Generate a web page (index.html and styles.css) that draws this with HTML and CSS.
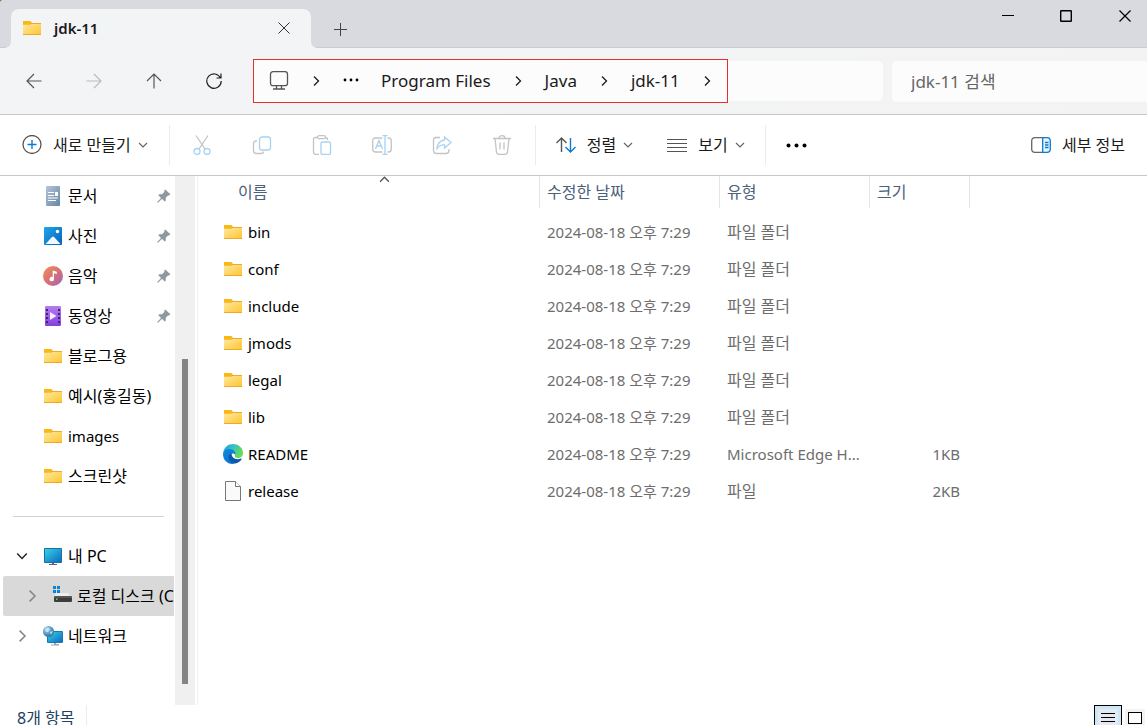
FILE: index.html
```html
<!DOCTYPE html>
<html lang="ko">
<head>
    <meta charset="UTF-8">
    <meta name="viewport" content="width=device-width, initial-scale=1.0">
    <title>jdk-11</title>
    <link rel="stylesheet" href="styles.css">
</head>
<body>
    <!-- Shared icons -->
    <svg class="sprite" aria-hidden="true">
        <defs>
            <linearGradient id="g-folder" x1="0" y1="0" x2="1" y2="1">
                <stop offset="0" stop-color="#ffe9a6"/><stop offset="1" stop-color="#fec62f"/>
            </linearGradient>
            <linearGradient id="g-doc" x1="0" y1="0" x2="1" y2="1">
                <stop offset="0" stop-color="#b4c6d8"/><stop offset="1" stop-color="#6585a5"/>
            </linearGradient>
            <linearGradient id="g-photo" x1="0" y1="0" x2="1" y2="1">
                <stop offset="0" stop-color="#1ba7ea"/><stop offset="1" stop-color="#0a62b8"/>
            </linearGradient>
            <linearGradient id="g-music" x1="0" y1="0" x2="1" y2="1">
                <stop offset="0" stop-color="#f29155"/><stop offset="0.55" stop-color="#d46f78"/><stop offset="1" stop-color="#9a63c4"/>
            </linearGradient>
            <linearGradient id="g-video" x1="0" y1="0" x2="0" y2="1">
                <stop offset="0" stop-color="#b67cf2"/><stop offset="1" stop-color="#8340dc"/>
            </linearGradient>
            <linearGradient id="g-screen" x1="0" y1="0" x2="1" y2="1">
                <stop offset="0" stop-color="#35d3e0"/><stop offset="1" stop-color="#0b6cc4"/>
            </linearGradient>
            <linearGradient id="g-edge-top" x1="0" y1="0" x2="1" y2="0.4">
                <stop offset="0" stop-color="#1e9de0"/><stop offset="0.5" stop-color="#35c1c8"/><stop offset="1" stop-color="#66dc51"/>
            </linearGradient>
            <linearGradient id="g-edge-left" x1="0" y1="0" x2="0.6" y2="1">
                <stop offset="0" stop-color="#1489d8"/><stop offset="1" stop-color="#0672d2"/>
            </linearGradient>
            <radialGradient id="g-globe" cx="0.35" cy="0.3" r="0.8">
                <stop offset="0" stop-color="#b9dcee"/><stop offset="0.6" stop-color="#4a92bf"/><stop offset="1" stop-color="#2c6c9c"/>
            </radialGradient>
        </defs>
        <symbol id="folder" viewBox="0 0 20 20">
            <path d="M1 4V14.500H19V5H10L8 3H1Z" fill="#f0ab1c"/>
            <path d="M1 6.500H8.500L9.500 5.500H19V16.500H1Z" fill="url(#g-folder)"/>
            <path d="M1 3H8L9.500 4.500L8 6.500H1Z" fill="#fbb714"/>
            <path d="M9 5.500H19M1 16.500H19" stroke="#eea92a"/>
        </symbol>
        <symbol id="doc" viewBox="0 0 20 20">
            <rect x="3" y="0" width="14" height="20" rx="1" fill="url(#g-doc)"/>
            <path d="M5 6.500H11M5 9.500H11M5 12H15M5 14.500H13" stroke="#fff"/>
            <rect x="12" y="6" width="3" height="4" fill="#fff"/>
        </symbol>
        <symbol id="photo" viewBox="0 0 20 20">
            <rect x="1" y="1" width="18" height="18" rx="1" fill="url(#g-photo)"/>
            <path d="M2.500 18L9 11Q10 10 11 11L17.500 18Z" fill="#f2f8ff"/>
            <circle cx="14.500" cy="5.500" r="1.700" fill="#fff"/>
        </symbol>
        <symbol id="music" viewBox="0 0 20 20">
            <circle cx="10" cy="10" r="10" fill="url(#g-music)"/>
            <path d="M9.700 4.500L13.800 5.800V8L11 7.200V13A2.200 2.200 0 1 1 9.700 11Z" fill="#fff"/>
        </symbol>
        <symbol id="video" viewBox="0 0 20 20">
            <rect x="2" y="0" width="16" height="20" rx="1" fill="url(#g-video)"/>
            <path d="M4 3V19M16 3V19" stroke="#3e2079" stroke-width="2" stroke-dasharray="2 2"/>
            <path d="M7 6L13.500 10L7 14Z" fill="#f5eefe"/>
        </symbol>
        <symbol id="pc" viewBox="0 0 20 20">
            <path d="M9 16H11V18H14V19H6V18H9Z" fill="#5b6670"/>
            <rect x="1" y="2" width="18" height="15" rx="1" fill="#196ea6"/>
            <rect x="2" y="3" width="16" height="13" fill="url(#g-screen)"/>
        </symbol>
        <symbol id="disk" viewBox="0 0 20 20">
            <path d="M4 7H16L19 11H2Z" fill="#ededed"/>
            <rect x="2" y="10" width="18" height="6" rx="1" fill="#3c3c3c"/>
            <path d="M2 11H20" stroke="#707070"/>
            <rect x="4" y="12.500" width="1.500" height="1.500" fill="#49e349"/>
            <path d="M1 0H4V3H1ZM5 0H8V3H5ZM1 4H4V7H1ZM5 4H8V7H5Z" fill="#0b82d5"/>
        </symbol>
        <symbol id="network" viewBox="0 0 20 20">
            <path d="M11 16H13V18H16V19.500H8V18.500H11Z" fill="#9ca7af"/>
            <rect x="4" y="5" width="16" height="12" rx="1" fill="#1879b5"/>
            <rect x="5" y="6" width="14" height="10" fill="url(#g-screen)"/>
            <circle cx="5.500" cy="5.500" r="5.500" fill="url(#g-globe)"/>
            <path d="M2 3L5 1.500L7 3L5 6L3 6ZM7 6L10 5L8 9Z" fill="#d7e8ee" opacity="0.8"/>
        </symbol>
        <symbol id="edge" viewBox="0 0 20 20">
            <path d="M0.300 8C1.200 3.300 5.200 0 10 0C15.800 0 20 4.200 20 9C20 12.200 17.700 14 15 14C12.700 14 11.500 13 12 12C13.200 9.800 11.500 7 8.500 6C5 4.800 1.700 6 0.300 8Z" fill="url(#g-edge-top)"/>
            <path d="M0 10C0 6.800 3 4.700 6.500 5C10.500 5.300 13 8.200 12.500 11C10.500 8.500 7.500 9.500 7 12.500C6.500 16 9 19 12 19.700C5 21 0 16.500 0 10Z" fill="url(#g-edge-left)"/>
            <path d="M8.500 9.300C6 10.200 5 13 6.200 15.600C7.500 18.300 10 19.600 12.500 19.600C15.500 18.800 17.600 17 18.800 15C19 14.600 18.600 14.300 18.200 14.500C13.500 16.500 8.500 14.500 8.500 9.300Z" fill="#0c59a4"/>
        </symbol>
        <symbol id="file" viewBox="0 0 20 20">
            <path d="M2.500 0.500H12.500L17.500 5.500V19.500H2.500Z" fill="#fafafa" stroke="#777"/>
            <path d="M12.500 0.500V5.500H17.500" fill="#fff" stroke="#777"/>
        </symbol>
        <symbol id="pin" viewBox="0 0 14 14">
            <path d="M8.200 0.600L13.400 5.300L12 6.400H11L8.700 8.800V11.700L7.700 12.600L5 9.800L1.300 13.500L0.300 13.700L0.500 12.700L4 9L1.300 6.300L2.200 5.300L5 5.200L7.500 2.700L7.200 1.600Z" fill="#8d989f"/>
        </symbol>
        <symbol id="chev-right" viewBox="0 0 10 10">
            <path d="M3 0.500L7.500 5L3 9.500" fill="none" stroke="currentColor" stroke-width="1.300"/>
        </symbol>
        <symbol id="chev-down" viewBox="0 0 10 10">
            <path d="M1 3L5 7L9 3" fill="none" stroke="currentColor" stroke-width="1.200"/>
        </symbol>
    </svg>

    <div class="window">
        <div class="title-bar">
            <div class="tab">
                <svg class="icon"><use href="#folder"/></svg>
                <span class="tab-title">jdk-11</span>
                <button class="tab-close" aria-label="탭 닫기">
                    <svg width="12" height="12" viewBox="0 0 12 12"><path d="M0.500 0.500L11.500 11.500M11.500 0.500L0.500 11.500" stroke="#333"/></svg>
                </button>
            </div>
            <button class="new-tab" aria-label="새 탭">
                <svg width="13" height="13" viewBox="0 0 13 13"><path d="M6.500 0V13M0 6.500H13" stroke="#444"/></svg>
            </button>
            <div class="window-buttons">
                <button aria-label="최소화"><svg width="12" height="12" viewBox="0 0 12 12"><path d="M0 5.500H12" stroke="#000"/></svg></button>
                <button aria-label="최대화"><svg width="12" height="12" viewBox="0 0 12 12"><rect x="0.700" y="0.700" width="10.600" height="10.600" rx="0.500" fill="none" stroke="#000" stroke-width="1.400"/></svg></button>
                <button aria-label="닫기"><svg width="12" height="12" viewBox="0 0 12 12"><path d="M0.500 0.500L11.500 11.500M11.500 0.500L0.500 11.500" stroke="#000" stroke-width="1.200"/></svg></button>
            </div>
        </div>

        <div class="nav-bar">
            <button class="nav-btn" aria-label="뒤로"><svg width="16" height="16" viewBox="0 0 16 16"><path d="M15.500 8H1M8 1L1 8L8 15"/></svg></button>
            <button class="nav-btn" aria-label="앞으로" disabled><svg width="16" height="16" viewBox="0 0 16 16"><path d="M0.500 8H15M8 1L15 8L8 15"/></svg></button>
            <button class="nav-btn" aria-label="위로"><svg width="16" height="16" viewBox="0 0 16 16"><path d="M8 15.500V1M1 8L8 1L15 8"/></svg></button>
            <button class="nav-btn dark" aria-label="새로 고침"><svg width="16" height="16" viewBox="0 0 16 16"><path d="M14.500 5A7.200 7.200 0 1 0 15.200 8M15 0.500V5H10.500"/></svg></button>
            <div class="address">
                <nav class="crumbs" aria-label="경로">
                    <svg class="icon" viewBox="0 0 20 20"><rect x="1.500" y="0.700" width="17" height="14" rx="2.500" fill="none" stroke="#555" stroke-width="1.300"/><path d="M7.500 15V18M12.500 15V18M4 18H16" stroke="#555" stroke-width="1.300"/></svg>
                    <svg class="chev"><use href="#chev-right"/></svg>
                    <svg width="16" height="16" viewBox="0 0 16 16"><circle cx="2" cy="7" r="1.400"/><circle cx="8" cy="7" r="1.400"/><circle cx="14" cy="7" r="1.400"/></svg>
                    <a href="#">Program Files</a>
                    <svg class="chev"><use href="#chev-right"/></svg>
                    <a href="#">Java</a>
                    <svg class="chev"><use href="#chev-right"/></svg>
                    <a href="#">jdk-11</a>
                    <svg class="chev"><use href="#chev-right"/></svg>
                </nav>
            </div>
            <input class="search" type="search" placeholder="jdk-11 검색" aria-label="jdk-11 검색">
        </div>

        <div class="toolbar">
            <button class="tool new">
                <svg class="icon" viewBox="0 0 20 20" fill="none"><circle cx="10" cy="9.500" r="9" stroke="#555" stroke-width="1.300"/><path d="M10 5V14M5.500 9.500H14.500" stroke="#0a7bd4" stroke-width="1.400"/></svg>
                새로 만들기
                <svg class="small-chev"><use href="#chev-down"/></svg>
            </button>
            <div class="tool-group">
                <button class="tool-icon" aria-label="잘라내기" disabled><svg class="icon" viewBox="0 0 20 20"><path class="gray" d="M4 0.500L13 14M16 0.500L7 14"/><circle class="blue" cx="5" cy="16.500" r="3"/><circle class="blue" cx="15" cy="16.500" r="3"/></svg></button>
                <button class="tool-icon" aria-label="복사" disabled><svg class="icon" viewBox="0 0 20 20"><path class="gray" d="M5 6H4Q1.500 6 1.500 8.500V15.500Q1.500 18.500 4.500 18.500H9Q11.500 18.500 11.500 16.500"/><rect class="blue" x="7.500" y="2" width="11" height="13" rx="2.500"/></svg></button>
                <button class="tool-icon" aria-label="붙여넣기" disabled><svg class="icon" viewBox="0 0 20 20"><path class="gray" d="M5.500 2.500H3.500Q1.500 2.500 1.500 4.500V17Q1.500 19.500 4 19.500H7M13.500 2.500Q15.500 2.500 15.500 5"/><rect class="gray" x="5.500" y="0.700" width="8" height="3" rx="1.500"/><rect class="blue" x="9" y="7" width="9.500" height="12.500" rx="1.500"/></svg></button>
                <button class="tool-icon" aria-label="이름 바꾸기" disabled><svg class="icon" viewBox="0 0 20 20"><path class="gray" d="M10.500 3H3.500Q0.700 3 0.700 6V14Q0.700 17 3.500 17H10.500M15.500 3H16.500Q19.300 3 19.300 6V14Q19.300 17 16.500 17H15.500"/><path class="blue" d="M13 1V19M10.500 0.700H15.500M10.500 19.300H15.500M3.500 14L7 5.500L10.500 14M4.700 11H9.300"/></svg></button>
                <button class="tool-icon" aria-label="공유" disabled><svg class="icon" viewBox="0 0 20 20"><path class="gray" d="M8 2.500H4Q1.500 2.500 1.500 5V15.500Q1.500 18.500 4.500 18.500H14Q17 18.500 17 15.500V14"/><path class="blue" d="M12.500 2L19 7.500L12.500 13V10Q8 9.500 5 13.500Q5.500 6 12.500 5Z"/></svg></button>
                <button class="tool-icon" aria-label="삭제" disabled><svg class="icon" viewBox="0 0 20 20"><path class="gray" d="M1 3.500H19M7 3.500Q7 0.700 10 0.700Q13 0.700 13 3.500M3 3.500L4.500 17Q4.700 19.300 7 19.300H13Q15.300 19.300 15.500 17L17 3.500M8 7.500V14.500M12 7.500V14.500"/></svg></button>
            </div>
            <div class="tool-group menus">
                <button class="tool">
                    <svg class="icon" viewBox="0 0 20 20" fill="none" stroke-width="1.400"><path d="M5.500 17V3M0.500 8L5.500 3L10.500 8" stroke="#555"/><path d="M14.500 3V17M9.500 12L14.500 17L19.500 12" stroke="#0a7bd4"/></svg>
                    정렬
                    <svg class="small-chev"><use href="#chev-down"/></svg>
                </button>
                <button class="tool">
                    <svg class="icon" viewBox="0 0 20 20"><path d="M0 4.500H20M0 8.500H20M0 12.500H20M0 16.500H20" stroke="#555"/></svg>
                    보기
                    <svg class="small-chev"><use href="#chev-down"/></svg>
                </button>
            </div>
            <button class="tool more" aria-label="더 보기">
                <svg width="21" height="20" viewBox="0 0 21 20"><circle cx="2.500" cy="10.500" r="2"/><circle cx="10.500" cy="10.500" r="2"/><circle cx="18.500" cy="10.500" r="2"/></svg>
            </button>
            <button class="tool details">
                <svg class="icon" viewBox="0 0 20 20" fill="none" stroke-width="1.300"><path d="M11.500 2.700H4Q0.700 2.700 0.700 6V14Q0.700 17.300 4 17.300H11.500" stroke="#666"/><path d="M11.700 2.700H16Q19.300 2.700 19.300 6V14Q19.300 17.300 16 17.300H11.700Z" fill="#e8f4fd" stroke="#0a7bd4"/><path d="M14 7.500H17.500M14 10H17.500M14 12.500H17.500" stroke="#0a7bd4"/></svg>
                세부 정보
            </button>
        </div>

        <div class="content">
            <aside class="sidebar">
                <ul class="tree">
                    <li><svg class="icon"><use href="#doc"/></svg><a href="#">문서</a><svg class="pin"><use href="#pin"/></svg></li>
                    <li><svg class="icon"><use href="#photo"/></svg><a href="#">사진</a><svg class="pin"><use href="#pin"/></svg></li>
                    <li><svg class="icon"><use href="#music"/></svg><a href="#">음악</a><svg class="pin"><use href="#pin"/></svg></li>
                    <li><svg class="icon"><use href="#video"/></svg><a href="#">동영상</a><svg class="pin"><use href="#pin"/></svg></li>
                    <li><svg class="icon"><use href="#folder"/></svg><a href="#">블로그용</a></li>
                    <li><svg class="icon"><use href="#folder"/></svg><a href="#">예시(홍길동)</a></li>
                    <li><svg class="icon"><use href="#folder"/></svg><a href="#" class="latin">images</a></li>
                    <li><svg class="icon"><use href="#folder"/></svg><a href="#">스크린샷</a></li>
                </ul>
                <hr class="divider">
                <ul class="tree devices">
                    <li><svg class="expand open"><use href="#chev-down"/></svg><svg class="icon"><use href="#pc"/></svg><a href="#">내 PC</a></li>
                    <li class="selected"><svg class="expand"><use href="#chev-right"/></svg><svg class="icon"><use href="#disk"/></svg><a href="#">로컬 디스크 (C:)</a></li>
                    <li><svg class="expand"><use href="#chev-right"/></svg><svg class="icon"><use href="#network"/></svg><a href="#">네트워크</a></li>
                </ul>
            </aside>
            <div class="scrollbar"><div class="thumb"></div></div>

            <main class="files">
                <table>
                    <colgroup>
                        <col class="col-name"><col class="col-date"><col class="col-type"><col class="col-size">
                    </colgroup>
                    <thead>
                        <tr>
                            <th><button>이름</button><svg class="sort"><use href="#chev-down"/></svg></th>
                            <th><button>수정한 날짜</button></th>
                            <th><button>유형</button></th>
                            <th><button>크기</button></th>
                        </tr>
                    </thead>
                    <tbody>
                        <tr><td><div class="name"><svg class="icon"><use href="#folder"/></svg>bin</div></td><td>2024-08-18 오후 7:29</td><td class="ko">파일 폴더</td><td></td></tr>
                        <tr><td><div class="name"><svg class="icon"><use href="#folder"/></svg>conf</div></td><td>2024-08-18 오후 7:29</td><td class="ko">파일 폴더</td><td></td></tr>
                        <tr><td><div class="name"><svg class="icon"><use href="#folder"/></svg>include</div></td><td>2024-08-18 오후 7:29</td><td class="ko">파일 폴더</td><td></td></tr>
                        <tr><td><div class="name"><svg class="icon"><use href="#folder"/></svg>jmods</div></td><td>2024-08-18 오후 7:29</td><td class="ko">파일 폴더</td><td></td></tr>
                        <tr><td><div class="name"><svg class="icon"><use href="#folder"/></svg>legal</div></td><td>2024-08-18 오후 7:29</td><td class="ko">파일 폴더</td><td></td></tr>
                        <tr><td><div class="name"><svg class="icon"><use href="#folder"/></svg>lib</div></td><td>2024-08-18 오후 7:29</td><td class="ko">파일 폴더</td><td></td></tr>
                        <tr><td><div class="name"><svg class="icon"><use href="#edge"/></svg>README</div></td><td>2024-08-18 오후 7:29</td><td>Microsoft Edge H...</td><td>1KB</td></tr>
                        <tr><td><div class="name"><svg class="icon"><use href="#file"/></svg>release</div></td><td>2024-08-18 오후 7:29</td><td class="ko">파일</td><td>2KB</td></tr>
                    </tbody>
                </table>
            </main>
        </div>

        <div class="status-bar">
            <span class="count">8개 항목</span>
            <div class="views">
                <button class="active" aria-label="자세히"><svg width="20" height="20" viewBox="0 0 20 20"><rect width="20" height="20" rx="2" fill="#e5eaf2"/><path d="M3 4.500H17M3 8.500H17M3 12.500H17" stroke="#000"/></svg></button>
                <button aria-label="큰 아이콘"><svg width="20" height="20" viewBox="0 0 20 20"><rect width="20" height="20" rx="2" fill="#f3f3f3"/><rect x="3.500" y="3.500" width="13" height="11" fill="#fff" stroke="#000"/></svg></button>
            </div>
        </div>
    </div>
</body>
</html>
```

FILE: styles.css
```css
* {
    box-sizing: border-box;
}

body {
    margin: 0;
    background-color: #4f9a55;
    font-family: "Noto Sans", "Noto Sans CJK KR", sans-serif;
    font-size: 15px;
    line-height: 20px;
    color: #1a1a1a;
    overflow: hidden;
}

button {
    display: flex;
    align-items: center;
    justify-content: center;
    padding: 0;
    border: none;
    background: none;
    font: inherit;
    color: inherit;
}

a {
    color: inherit;
    text-decoration: none;
}

svg {
    display: block;
    flex-shrink: 0;
}

.sprite {
    position: absolute;
    width: 0;
    height: 0;
}

.icon {
    width: 20px;
    height: 20px;
}

.window {
    display: flex;
    flex-direction: column;
    height: 100vh;
    background-color: #fff;
    border-top-left-radius: 4px;
    overflow: hidden;
}

/* Title bar and tabs */
.title-bar {
    display: flex;
    height: 48px;
    flex-shrink: 0;
    padding-left: 11px;
    background-color: #d8dadf;
    box-shadow: inset 0 -1px #cbccd1;
}

.tab {
    display: flex;
    align-items: center;
    position: relative;
    width: 300px;
    margin-top: 9px;
    padding: 0 21px 2px 11px;
    background-color: #f3f4f6;
    border-radius: 8px 8px 0 0;
}

.tab::before,
.tab::after {
    content: "";
    position: absolute;
    bottom: 0;
    width: 5px;
    height: 5px;
}

.tab::before {
    left: -5px;
    background: radial-gradient(circle at 0 0, #d8dadf 4px, #f3f4f6 5px);
}

.tab::after {
    right: -5px;
    background: radial-gradient(circle at 100% 0, #d8dadf 4px, #f3f4f6 5px);
}

.tab-title {
    flex: 1;
    margin-left: 12px;
    font-weight: 600;
}

.new-tab {
    width: 58px;
    padding-top: 10px;
}

.window-buttons {
    display: flex;
    margin-left: auto;
    height: 32px;
}

.window-buttons button {
    width: 58px;
}

.window-buttons button:last-child {
    width: 52px;
    padding-left: 8px;
}

/* Navigation and address */
.nav-bar {
    display: flex;
    align-items: center;
    height: 67px;
    flex-shrink: 0;
    padding-left: 4px;
    background: linear-gradient(90deg, #f2f4f6, #f3f3f3);
    border-bottom: 1px solid #c8c8c8;
}

.nav-btn {
    width: 60px;
    height: 40px;
}

.nav-btn path {
    fill: none;
    stroke: #555;
    stroke-width: 1.2;
}

.nav-btn.dark path {
    stroke: #222;
}

.nav-btn:disabled path {
    stroke: #bbb;
}

.address {
    display: flex;
    align-items: center;
    flex: 1;
    height: 40px;
    margin: 0 9px;
    background-color: #fcfcfc;
    border-radius: 5px;
}

.crumbs {
    display: flex;
    align-items: center;
    gap: 22px;
    height: 44px;
    padding: 0 15px;
    background-color: #fcfcfc;
    border: 1px solid #e92c2c;
    font-size: 17px;
}

.chev {
    width: 10px;
    height: 10px;
}

.search {
    width: 255px;
    height: 41px;
    padding: 0 19px;
    border: none;
    border-radius: 5px 0 0 5px;
    outline: none;
    background-color: #fcfcfc;
    font-family: inherit;
    font-size: 17px;
}

.search::placeholder {
    color: #666;
}

/* Toolbar */
.toolbar {
    display: flex;
    align-items: center;
    height: 61px;
    flex-shrink: 0;
    padding: 0 22px;
    border-bottom: 1px solid #c8c8c8;
    font-size: 16px;
}

.tool {
    gap: 11px;
}

.tool.new {
    padding-right: 21px;
}

.small-chev {
    width: 10px;
    height: 10px;
    margin-left: -4px;
    color: #666;
}

.tool-group {
    display: flex;
    align-items: center;
    height: 40px;
    padding: 0 3px 0 2px;
    border: solid #ececec;
    border-width: 0 1px;
}

.tool-icon {
    width: 60px;
}

.gray,
.blue {
    fill: none;
    stroke: #c4c4c4;
    stroke-width: 1.3;
}

.blue {
    stroke: #a6d2f4;
}

.menus {
    gap: 34px;
    padding: 0 20px;
    border-left: none;
}

.more {
    margin-left: 20px;
}

.details {
    margin-left: auto;
}

/* Sidebar */
.content {
    display: flex;
    flex: 1;
    min-height: 0;
}

.sidebar {
    width: 175px;
    flex-shrink: 0;
    overflow: hidden;
    font-size: 16px;
    color: #000;
}

.tree {
    margin: 0;
    padding: 0 1px 0 3px;
    list-style: none;
}

.tree li {
    display: flex;
    align-items: center;
    gap: 5px;
    height: 40px;
    padding: 0 3px 0 40px;
    white-space: nowrap;
    overflow: hidden;
}

.tree .latin {
    font-size: 15px;
}

.pin {
    width: 14px;
    height: 14px;
    margin-left: auto;
}

.divider {
    height: 1px;
    margin: 20px 11px 19px 13px;
    border: none;
    background-color: #d2d2d2;
}

.devices li {
    padding-left: 13px;
}

.devices .selected {
    padding: 0 0 0 23px;
    background-color: #d9d9d9;
    border-radius: 2px 0 0 2px;
}

.expand {
    width: 12px;
    height: 12px;
    margin-right: 10px;
    color: #888;
}

.selected .expand {
    margin-right: 9px;
}

.expand.open {
    color: #222;
}

.scrollbar {
    display: flex;
    justify-content: center;
    width: 20px;
    flex-shrink: 0;
    padding: 183px 0 21px;
    background-color: #f0f0f0;
}

.thumb {
    width: 6px;
    background-color: #858585;
}

/* File list */
.files {
    flex: 1;
    min-width: 0;
    margin-left: 2px;
    border-left: 1px solid #f2f2f2;
}

table {
    width: 772px;
    table-layout: fixed;
    border-collapse: collapse;
}

.col-name {
    width: 342px;
}

.col-date {
    width: 180px;
}

.col-type {
    width: 150px;
}

.col-size {
    width: 100px;
}

th {
    position: relative;
    height: 37px;
    padding: 0;
    vertical-align: top;
    font-size: 16px;
    font-weight: normal;
    color: #4c607a;
}

th button {
    justify-content: flex-start;
    width: 100%;
    height: 32px;
    padding-left: 7px;
    border-right: 1px solid #e5e5e5;
}

th:first-child button {
    padding-left: 40px;
}

.sort {
    position: absolute;
    top: -2px;
    left: 181px;
    width: 11px;
    height: 11px;
    color: #555;
    transform: rotate(180deg);
}

td {
    height: 37px;
    padding: 0 7px;
    color: #6d6d6d;
    white-space: nowrap;
}

td:first-child {
    padding-left: 25px;
    color: #000;
}

td:last-child {
    padding-right: 10px;
    text-align: right;
}

.ko {
    font-size: 16px;
}

.name {
    display: flex;
    align-items: center;
    gap: 5px;
}

/* Status bar */
.status-bar {
    display: flex;
    align-items: flex-start;
    justify-content: space-between;
    height: 20px;
    flex-shrink: 0;
    padding: 0 0 0 17px;
    overflow: hidden;
    font-size: 16px;
    color: #253f63;
}

.count {
    padding-right: 12px;
    border-right: 1px solid #ececec;
    line-height: 26px;
}

.views {
    display: flex;
}

.views button {
    width: 25px;
    height: 28px;
}

.views .active {
    width: 28px;
    border: 1px solid #000;
    background-color: #cce8f6;
}
```
